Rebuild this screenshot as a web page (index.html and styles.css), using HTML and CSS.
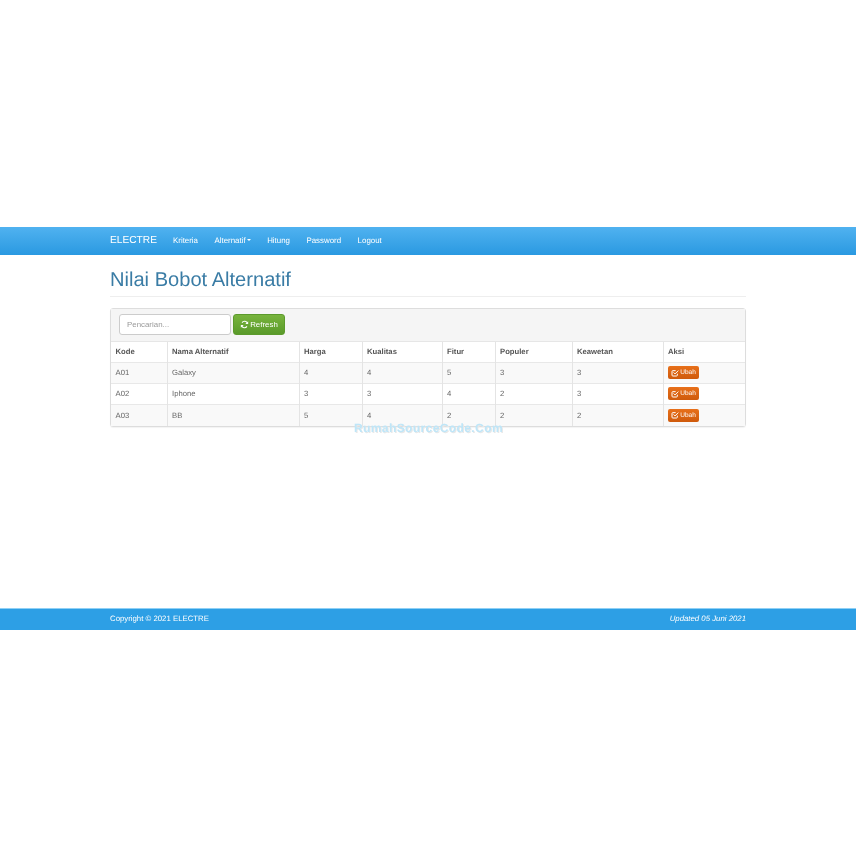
FILE: index.html
```html
<!DOCTYPE html>
<html lang="id">
<head>
<meta charset="utf-8">
<title>ELECTRE</title>
<link rel="stylesheet" href="styles.css">
</head>
<body>
<div class="shot">
  <nav class="navbar">
    <div class="container nav-inner">
      <a class="brand">ELECTRE</a>
      <a class="nav-link">Kriteria</a>
      <a class="nav-link">Alternatif<span class="caret"></span></a>
      <a class="nav-link">Hitung</a>
      <a class="nav-link">Password</a>
      <a class="nav-link">Logout</a>
    </div>
  </nav>
  <main class="container main">
    <h1 class="page-title">Nilai Bobot Alternatif</h1>
    <section class="panel">
      <div class="toolbar">
        <input class="search" placeholder="Pencarian...">
        <button class="btn-refresh">
          <svg class="icon-refresh" viewBox="0 0 16 16" aria-hidden="true"><path d="M13.2 6.2A5.4 5.4 0 0 0 3.6 4.6" /><path d="M2.8 9.8a5.4 5.4 0 0 0 9.6 1.6" /><path class="fill" d="M14.5 2.2v5h-5zM1.5 13.8v-5h5z" /></svg>
          Refresh
        </button>
      </div>
      <table class="grid">
        <colgroup>
          <col class="c1"><col class="c2"><col class="c3"><col class="c4"><col class="c5"><col class="c6"><col class="c7"><col class="c8">
        </colgroup>
        <thead>
          <tr><th>Kode</th><th>Nama Alternatif</th><th>Harga</th><th>Kualitas</th><th>Fitur</th><th>Populer</th><th>Keawetan</th><th>Aksi</th></tr>
        </thead>
        <tbody>
          <tr class="odd"><td>A01</td><td>Galaxy</td><td>4</td><td>4</td><td>5</td><td>3</td><td>3</td><td><a class="btn-ubah"><svg class="icon-edit" viewBox="0 0 12 12" aria-hidden="true"><path d="M9.500 7v2.200A1.300 1.300 0 0 1 8.200 10.500H2.800A1.300 1.300 0 0 1 1.500 9.200V3.800A1.300 1.300 0 0 1 2.800 2.500H7" /><path d="M3.800 5.200L6 7.400 11 2.400" /></svg>Ubah</a></td></tr>
          <tr><td>A02</td><td>Iphone</td><td>3</td><td>3</td><td>4</td><td>2</td><td>3</td><td><a class="btn-ubah"><svg class="icon-edit" viewBox="0 0 12 12" aria-hidden="true"><path d="M9.500 7v2.200A1.300 1.300 0 0 1 8.200 10.500H2.800A1.300 1.300 0 0 1 1.500 9.200V3.800A1.300 1.300 0 0 1 2.800 2.500H7" /><path d="M3.800 5.200L6 7.400 11 2.400" /></svg>Ubah</a></td></tr>
          <tr class="odd"><td>A03</td><td>BB</td><td>5</td><td>4</td><td>2</td><td>2</td><td>2</td><td><a class="btn-ubah"><svg class="icon-edit" viewBox="0 0 12 12" aria-hidden="true"><path d="M9.500 7v2.200A1.300 1.300 0 0 1 8.200 10.500H2.800A1.300 1.300 0 0 1 1.500 9.200V3.800A1.300 1.300 0 0 1 2.800 2.500H7" /><path d="M3.800 5.200L6 7.400 11 2.400" /></svg>Ubah</a></td></tr>
        </tbody>
      </table>
      <div class="watermark">RumahSourceCode.Com</div>
    </section>
  </main>
  <footer class="footer">
    <div class="container foot-inner">
      <span>Copyright © 2021 ELECTRE</span>
      <em>Updated 05 Juni 2021</em>
    </div>
  </footer>
</div>
</body>
</html>
```
FILE: styles.css
```css
* { box-sizing: border-box; }
html, body { margin: 0; padding: 0; background: #fff; }
body { font-family: "Liberation Sans", Arial, sans-serif; color: #333; text-rendering: geometricPrecision; }
.shot { width: 856px; height: 856px; padding-top: 227px; overflow: hidden; display: flex; flex-direction: column; will-change: transform; }
.container { width: 636px; margin-left: 110px; }
.navbar { height: 28px; background: linear-gradient(#50b2f0, #2a99e1); flex: none; }
.nav-inner { height: 26px; display: flex; align-items: center; color: #fff; }
.brand { font-size: 10.200px; width: 63px; color: #fff; }
.nav-link { font-size: 7.900px; color: #fff; margin-right: 16.500px; }
.caret { display: inline-block; margin-left: 1px; border-top: 2px solid #fff; border-left: 2px solid transparent; border-right: 2px solid transparent; vertical-align: middle; }
.main { flex: none; height: 353px; }
.page-title { margin: 0; padding: 13px 0 5px; height: 42px; font-size: 20.100px; line-height: 24px; font-weight: 400; color: #3a7ca5; border-bottom: 1px solid #eee; }
.panel { position: relative; margin-top: 11px; height: 119px; border: 1px solid #ddd; border-radius: 3px; background: #fff; box-shadow: 0 1px 1px rgba(0,0,0,.05); }
.toolbar { height: 33px; background: #f5f5f5; display: flex; align-items: center; padding: 0 0 1px 8px; gap: 2px; border-bottom: 1px solid #e6e6e6; }
.search { width: 112px; height: 21px; border: 1px solid #ccc; border-radius: 3px; padding: 0 7px; font: 7.900px "Liberation Sans", Arial, sans-serif; background: #fff; outline: none; }
.search::placeholder { color: #999; opacity: 1; }
.btn-refresh { width: 52px; height: 21px; display: flex; align-items: center; justify-content: center; gap: 1px; padding: 0; border: 1px solid #5c9a2c; border-radius: 3px; background: linear-gradient(#78b43d, #5a9a2a); color: #fff; font: 7.900px "Liberation Sans", Arial, sans-serif; }
.icon-refresh { width: 9px; height: 9px; fill: none; stroke: #fff; stroke-width: 1.800; }
.icon-refresh .fill { fill: #fff; stroke: none; }
.grid { width: 634px; table-layout: fixed; border-collapse: collapse; font-size: 7.700px; }
.c1 { width: 56px; } .c2 { width: 132px; } .c3 { width: 63px; } .c4 { width: 80px; }
.c5 { width: 53px; } .c6 { width: 77px; } .c7 { width: 91px; } .c8 { width: 82px; }
.grid th, .grid td { padding: 0 4.500px; text-align: left; border-left: 1px solid #e4e4e4; border-top: 1px solid #e8e8e8; vertical-align: middle; overflow: hidden; white-space: nowrap; }
.grid th:first-child, .grid td:first-child { border-left: 0; }
.grid thead tr:first-child th { border-top: 0; }
.grid th { height: 20px; padding-bottom: 1px; font-weight: 700; color: #555; }
.grid td { height: 21.300px; color: #666; }
.odd td { background: #f9f9f9; }
.btn-ubah { display: inline-flex; align-items: center; justify-content: center; gap: 1px; width: 31px; height: 13px; border-radius: 2px; background: linear-gradient(#e8701a, #cf5a0c); color: #fff; font-size: 6.500px; line-height: 13px; vertical-align: middle; }
.icon-edit { width: 8px; height: 8px; fill: none; stroke: #fff; stroke-width: 1.500; }
.watermark { position: absolute; left: 243px; top: 112px; font-size: 12px; font-weight: 700; letter-spacing: .4px; color: #bfe6f8; text-shadow: 1px 1px 0 #e8e8e8; white-space: nowrap; }
.footer { flex: none; height: 22px; background: #2d9fe5; border-top: 1px solid #8fd0f5; }
.foot-inner { height: 19px; display: flex; align-items: center; justify-content: space-between; color: #fff; font-size: 7.800px; }
```
